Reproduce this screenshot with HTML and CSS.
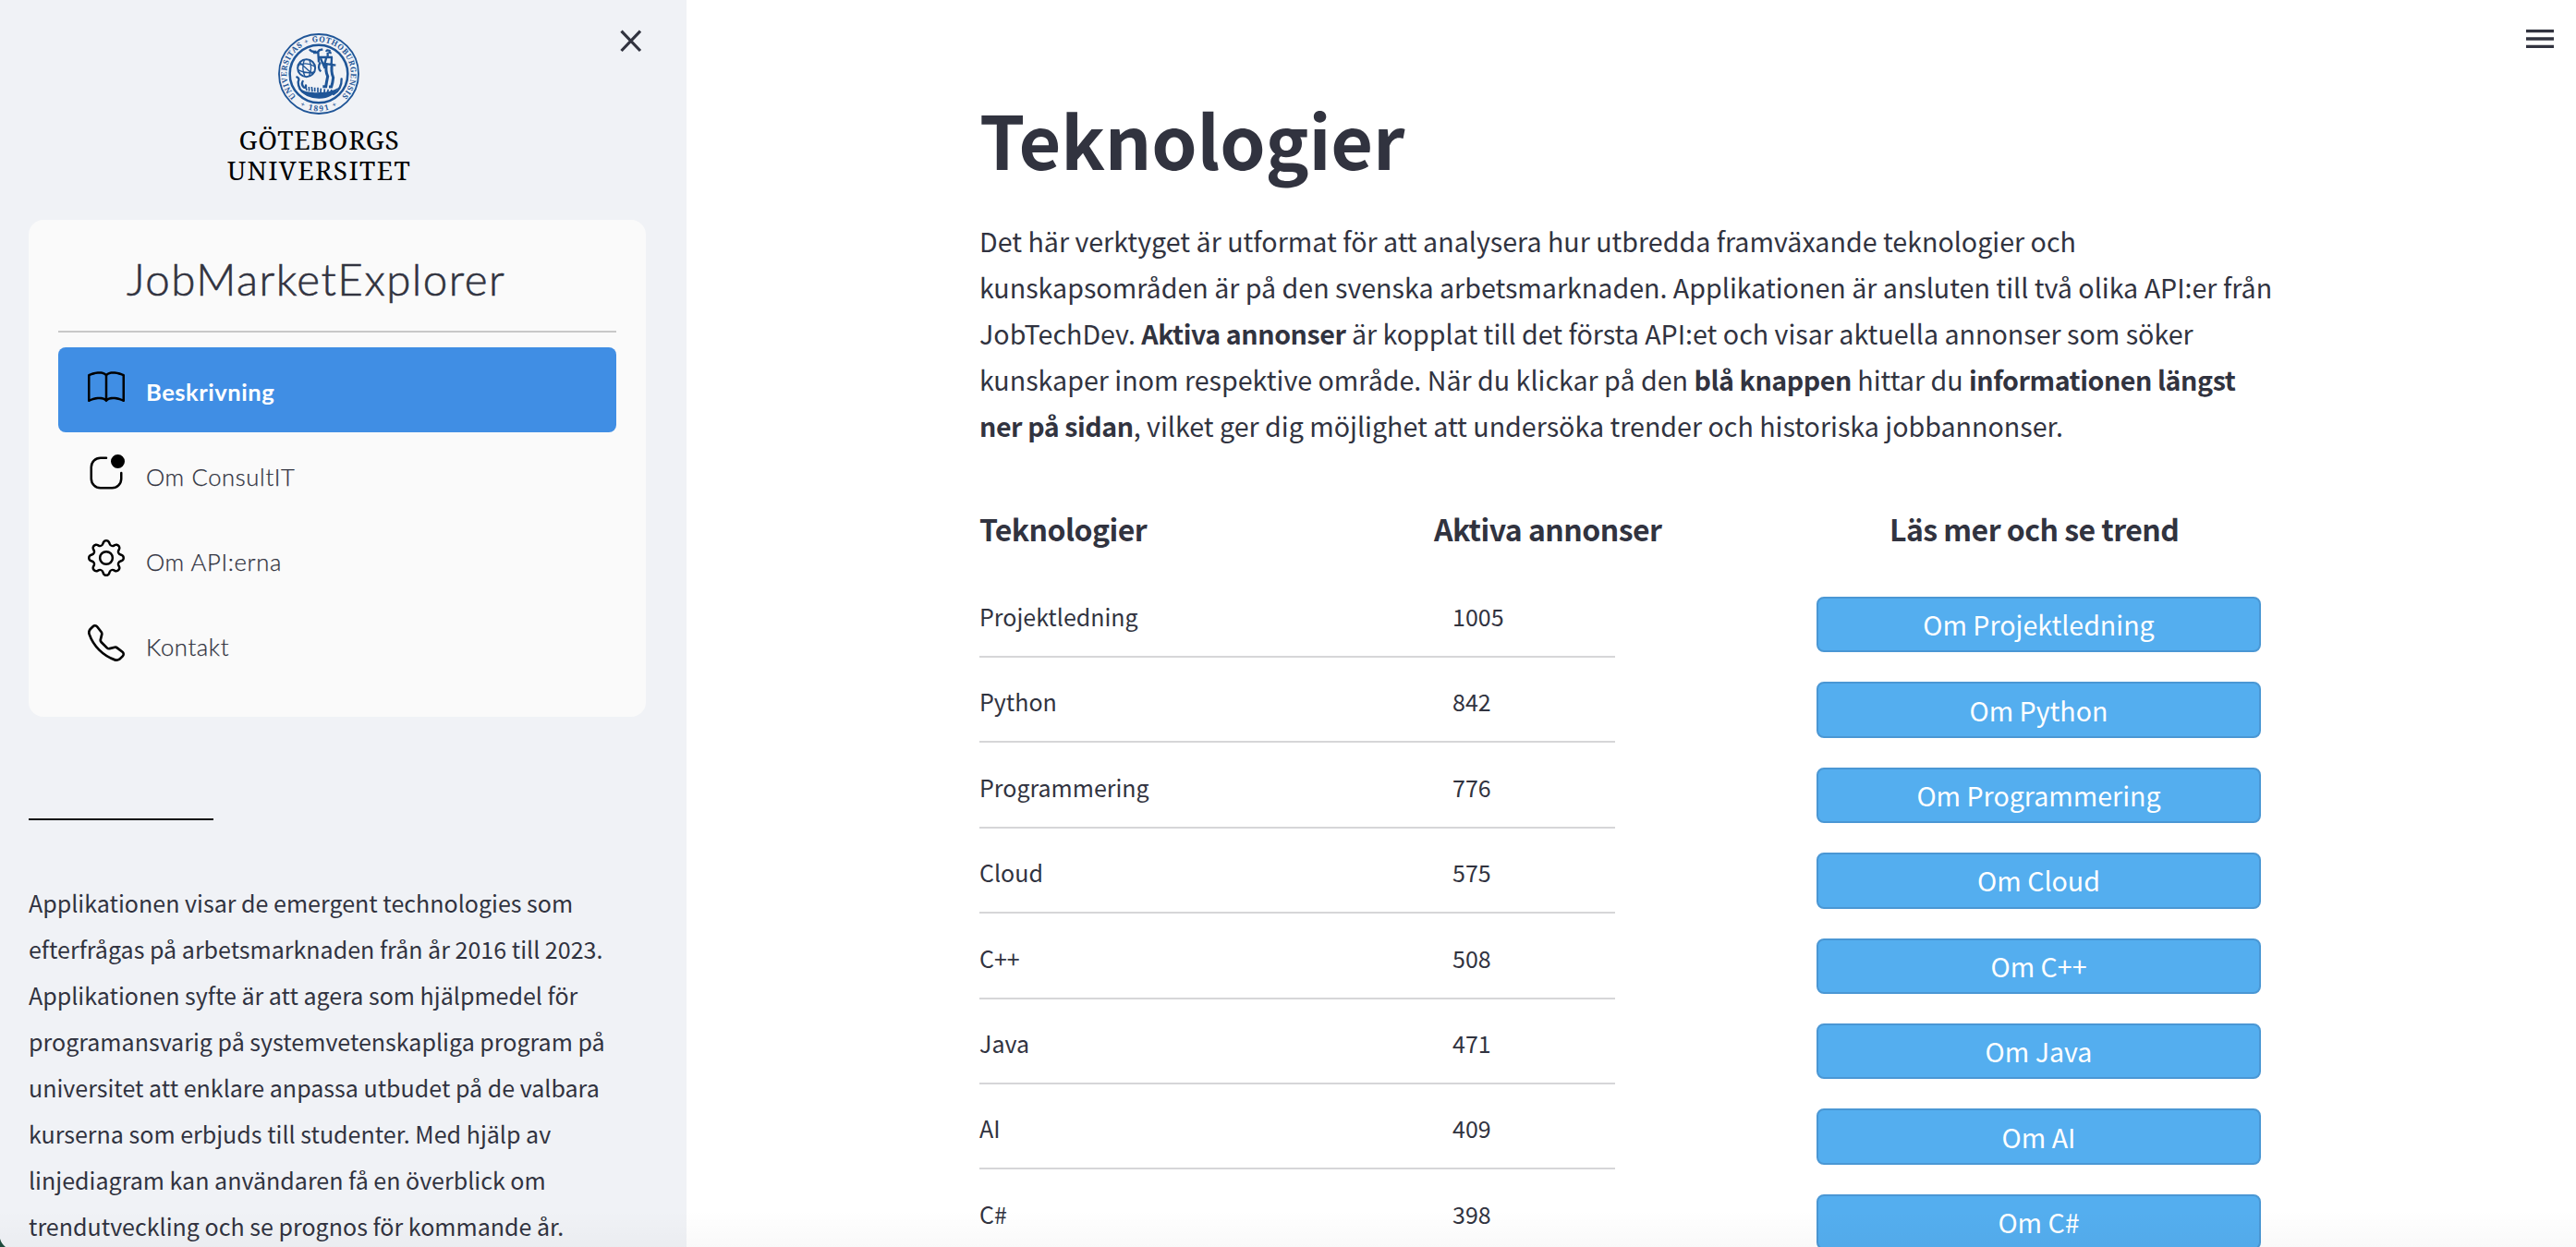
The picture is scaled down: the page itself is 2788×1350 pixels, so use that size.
FILE: index.html
```html
<!DOCTYPE html>
<html lang="sv">
<head>
<meta charset="utf-8">
<title>JobMarketExplorer</title>
<link rel="stylesheet" href="styles.css">
</head>
<body>
<div class="app">
  <aside class="sidebar">
    <button class="close" aria-label="Stäng">
      <svg width="24" height="25" viewBox="0 0 24 25"><path d="M1.5 1.7 22 23M22 1.7 1.5 23" fill="none" stroke="#31333f" stroke-width="3.2"/></svg>
    </button>
    <div class="logo">
      <svg class="seal" viewBox="33 18 264 264">
        <defs>
          <path id="ring-top" d="M91.5 223.5A104 104 0 1 1 238.5 223.5"/>
          <path id="ring-bottom" d="M102.7 253.7A121 121 0 0 0 227.3 253.7"/>
        </defs>
        <g fill="none" stroke="#1f5597">
          <circle cx="165" cy="150" r="129" stroke-width="5.5"/>
          <circle cx="165" cy="150" r="94" stroke-width="7.5"/>
          <circle cx="125" cy="131" r="28.5" stroke-width="6"/>
          <path stroke-width="4" d="M98 122q28-12 54 4M97 137q26 14 54 7M118 104q-10 28 2 54M134 104q12 26-1 54M103 113l42 38"/>
          <path stroke-width="7" stroke-linecap="round" d="M94 160q10 4 4 16 0 26 24 38M239 166q1 34-26 50M113 174q-6 10 4 20 8 2 6-7"/>
          <path stroke-width="7" d="M135 70q6 10 22 7M147 81q14 2 20-8l11-3M163 80l2 32M166 96h44M190 78q0-8 10-3-2 8 6 6M194 80v20M190 96q-5 17-7 26M207 96l-1 24M178 116l42 6M170 112q-11 20 2 30M171 100l14 32"/>
          <path stroke-width="9" d="M190 116q-4 26 4 42-4 20-6 33h-10M208 118q-4 26 4 44-2 18-6 30h-8"/>
          <path stroke-width="5" d="M122 190l4 14M133 192l1 14M142 192l2 16M152 194v14M162 194v16M172 197l-1 14M184 199l-1 12M196 200l-3 10M207 201l-4 10"/>
        </g>
        <path fill="#1f5597" d="M98 196q28 18 70 14 38 0 60-15-18 36-63 35-46 0-67-34Z"/>
        <g fill="#1f5597" class="seal-text">
          <text textLength="488"><textPath href="#ring-top" textLength="488">UNIVERSITAS + GOTHOBURGENSIS</textPath></text>
          <text textLength="129"><textPath href="#ring-bottom" textLength="129">+ 1891 +</textPath></text>
        </g>
      </svg>
      <div class="name name-top">GÖTEBORGS</div>
      <div class="name">UNIVERSITET</div>
    </div>

    <nav class="card">
      <h2 class="brand">JobMarketExplorer</h2>
      <ul class="menu">
        <li class="item active">
          <svg class="icon" viewBox="0 0 16 16"><path d="M1 2.828c.885-.37 2.154-.769 3.388-.893 1.33-.134 2.458.063 3.112.752v9.746c-.935-.53-2.12-.603-3.213-.493-1.18.12-2.37.461-3.287.811zm7.5-.141c.654-.689 1.782-.886 3.112-.752 1.234.124 2.503.523 3.388.893v9.923c-.918-.35-2.107-.692-3.287-.81-1.094-.111-2.278-.039-3.213.492zM8 1.783C7.015.936 5.587.81 4.287.94c-1.514.153-3.042.672-3.994 1.105A.5.5 0 0 0 0 2.5v11a.5.5 0 0 0 .707.455c.882-.4 2.303-.881 3.68-1.02 1.409-.142 2.59.087 3.223.877a.5.5 0 0 0 .78 0c.633-.79 1.814-1.019 3.222-.877 1.378.139 2.8.62 3.681 1.02A.5.5 0 0 0 16 13.5v-11a.5.5 0 0 0-.293-.455c-.952-.433-2.48-.952-3.994-1.105C10.413.809 8.985.936 8 1.783"/></svg>
          <span>Beskrivning</span>
        </li>
        <li class="item">
          <svg class="icon" viewBox="0 0 16 16"><path d="M5.5 2A3.5 3.5 0 0 0 2 5.5v5A3.5 3.5 0 0 0 5.5 14h5a3.5 3.5 0 0 0 3.5-3.5V8a.5.5 0 0 1 1 0v2.5a4.5 4.5 0 0 1-4.5 4.5h-5A4.5 4.5 0 0 1 1 10.5v-5A4.5 4.5 0 0 1 5.5 1H8a.5.5 0 0 1 0 1zM16 3a3 3 0 1 1-6 0 3 3 0 0 1 6 0"/></svg>
          <span>Om ConsultIT</span>
        </li>
        <li class="item">
          <svg class="icon" viewBox="0 0 16 16"><path d="M8 4.754a3.246 3.246 0 1 0 0 6.492 3.246 3.246 0 0 0 0-6.492M5.754 8a2.246 2.246 0 1 1 4.492 0 2.246 2.246 0 0 1-4.492 0"/><path d="M9.796 1.343c-.527-1.79-3.065-1.79-3.592 0l-.094.319a.873.873 0 0 1-1.255.52l-.292-.16c-1.64-.892-3.433.902-2.54 2.541l.159.292a.873.873 0 0 1-.52 1.255l-.319.094c-1.79.527-1.79 3.065 0 3.592l.319.094a.873.873 0 0 1 .52 1.255l-.16.292c-.892 1.64.901 3.434 2.541 2.54l.292-.159a.873.873 0 0 1 1.255.52l.094.319c.527 1.79 3.065 1.79 3.592 0l.094-.319a.873.873 0 0 1 1.255-.52l.292.16c1.64.893 3.434-.902 2.54-2.541l-.159-.292a.873.873 0 0 1 .52-1.255l.319-.094c1.79-.527 1.79-3.065 0-3.592l-.319-.094a.873.873 0 0 1-.52-1.255l.16-.292c.893-1.64-.902-3.433-2.541-2.54l-.292.159a.873.873 0 0 1-1.255-.52zm-2.633.283c.246-.835 1.428-.835 1.674 0l.094.319a1.873 1.873 0 0 0 2.693 1.115l.291-.16c.764-.415 1.6.42 1.184 1.185l-.159.292a1.873 1.873 0 0 0 1.116 2.692l.318.094c.835.246.835 1.428 0 1.674l-.319.094a1.873 1.873 0 0 0-1.115 2.693l.16.291c.415.764-.42 1.6-1.185 1.184l-.291-.159a1.873 1.873 0 0 0-2.693 1.116l-.094.318c-.246.835-1.428.835-1.674 0l-.094-.319a1.873 1.873 0 0 0-2.692-1.115l-.292.16c-.764.415-1.6-.42-1.184-1.185l.159-.291A1.873 1.873 0 0 0 1.945 8.93l-.319-.094c-.835-.246-.835-1.428 0-1.674l.319-.094A1.873 1.873 0 0 0 3.06 4.377l-.16-.292c-.415-.764.42-1.6 1.185-1.184l.292.159a1.873 1.873 0 0 0 2.692-1.115z"/></svg>
          <span>Om API:erna</span>
        </li>
        <li class="item">
          <svg class="icon" viewBox="0 0 16 16"><path d="M3.654 1.328a.678.678 0 0 0-1.015-.063L1.605 2.3c-.483.484-.661 1.169-.45 1.77a17.6 17.6 0 0 0 4.168 6.608 17.6 17.6 0 0 0 6.608 4.168c.601.211 1.286.033 1.77-.45l1.034-1.034a.678.678 0 0 0-.063-1.015l-2.307-1.794a.68.68 0 0 0-.58-.122l-2.19.547a1.75 1.75 0 0 1-1.657-.459L5.482 8.062a1.75 1.75 0 0 1-.46-1.657l.548-2.19a.68.68 0 0 0-.122-.58zM1.884.511a1.745 1.745 0 0 1 2.612.163L6.29 2.98c.329.423.445.974.315 1.494l-.547 2.19a.68.68 0 0 0 .178.643l2.457 2.457a.68.68 0 0 0 .644.178l2.189-.547a1.75 1.75 0 0 1 1.494.315l2.306 1.794c.829.645.905 1.87.163 2.611l-1.034 1.034c-.74.74-1.846 1.065-2.877.702a18.6 18.6 0 0 1-7.01-4.42 18.6 18.6 0 0 1-4.42-7.009c-.362-1.03-.037-2.137.703-2.877z"/></svg>
          <span>Kontakt</span>
        </li>
      </ul>
    </nav>

    <hr class="rule">
    <p class="about">Applikationen visar de emergent technologies som<br>efterfrågas på arbetsmarknaden från år 2016 till 2023.<br>Applikationen syfte är att agera som hjälpmedel för<br>programansvarig på systemvetenskapliga program på<br>universitet att enklare anpassa utbudet på de valbara<br>kurserna som erbjuds till studenter. Med hjälp av<br>linjediagram kan användaren få en överblick om<br>trendutveckling och se prognos för kommande år.</p>
  </aside>

  <main class="main">
    <button class="burger" aria-label="Meny">
      <svg width="30" height="20" viewBox="0 0 30 20"><path d="M0 0h30v3.3H0zM0 8.3h30v3.4H0zM0 16.7h30V20H0z" fill="#31333f"/></svg>
    </button>
    <h1 class="title">Teknologier</h1>
    <p class="intro">Det här verktyget är utformat för att analysera hur utbredda framväxande teknologier och<br>kunskapsområden är på den svenska arbetsmarknaden. Applikationen är ansluten till två olika API:er från<br>JobTechDev. <strong>Aktiva annonser</strong> är kopplat till det första API:et och visar aktuella annonser som söker<br>kunskaper inom respektive område. När du klickar på den <strong>blå knappen</strong> hittar du <strong>informationen längst</strong><br><strong>ner på sidan</strong>, vilket ger dig möjlighet att undersöka trender och historiska jobbannonser.</p>

    <div class="heads">
      <h3>Teknologier</h3><h3>Aktiva annonser</h3><h3 class="trend">Läs mer och se trend</h3>
    </div>
    <div class="rows">
      <div class="row"><div class="data"><span>Projektledning</span><span>1005</span></div><button class="btn">Om Projektledning</button></div>
      <div class="row"><div class="data"><span>Python</span><span>842</span></div><button class="btn">Om Python</button></div>
      <div class="row"><div class="data"><span>Programmering</span><span>776</span></div><button class="btn">Om Programmering</button></div>
      <div class="row"><div class="data"><span>Cloud</span><span>575</span></div><button class="btn">Om Cloud</button></div>
      <div class="row"><div class="data"><span>C++</span><span>508</span></div><button class="btn">Om C++</button></div>
      <div class="row"><div class="data"><span>Java</span><span>471</span></div><button class="btn">Om Java</button></div>
      <div class="row"><div class="data"><span>AI</span><span>409</span></div><button class="btn">Om AI</button></div>
      <div class="row"><div class="data"><span>C#</span><span>398</span></div><button class="btn">Om C#</button></div>
    </div>
  </main>
</div>
<div class="shade"></div>
<svg class="corner" width="6" height="9" viewBox="0 0 6 9"><path d="M0 0Q1.5 5.500 6 9H0Z" fill="#1d4a3c"/></svg>
</body>
</html>
```
FILE: styles.css
```css
* { box-sizing: border-box; }

body {
  margin: 0;
  height: 1350px;
  overflow: hidden;
  background: #fff;
  color: #31333f;
  font-family: "Noto Sans CJK SC", "Noto Sans", sans-serif;
}

h1, h2, h3, p, ul { margin: 0; padding: 0; }
button { padding: 0; border: 0; background: none; font-family: inherit; }

.app { display: flex; height: 1350px; overflow: hidden; }

/* Sidebar */
.sidebar {
  position: relative;
  flex: none;
  width: 743px;
  padding: 36px 44px 0 31px;
  background: #f0f2f6;
}
.close { position: absolute; top: 31.5px; left: 671px; line-height: 0; }

.logo {
  display: flex;
  flex-direction: column;
  align-items: center;
  width: 629px;
  height: 202px;
}
.seal { display: block; width: 88px; height: 88px; margin-right: 2px; }
.seal-text { font: 700 25px "Noto Serif", serif; }
.name {
  color: #000;
  font: 400 28px/33px "Noto Serif", serif;
  letter-spacing: 1.4px;
  white-space: nowrap;
}
.name-top { margin-top: 10.5px; letter-spacing: 0.8px; }

.card {
  height: 538px;
  padding: 32px 32px 0;
  border-radius: 16px;
  background: #fafafa;
}
.brand {
  height: 90px;
  padding-left: 74px;
  border-bottom: 2px solid #c8c8c8;
  font: 300 47.5px/64px Lato, sans-serif;
  letter-spacing: 1.5px;
  -webkit-text-stroke: 0.6px #31333f;
  white-space: nowrap;
}
.menu { margin-top: 16px; list-style: none; }
.item {
  display: flex;
  gap: 23px;
  height: 92px;
  padding: 24px 32px 0;
  border-radius: 8px;
  font: 300 25.6px/40px Lato, sans-serif;
  letter-spacing: 0.65px;
  -webkit-text-stroke: 0.25px #31333f;
}
.item span { margin-top: 4px; }
.item.active {
  background: #408ee4;
  color: #fff;
  font-weight: 700;
  letter-spacing: 0.5px;
  -webkit-text-stroke: 0;
}
.icon { flex: none; width: 40px; height: 40px; fill: #000; }

.rule { width: 200px; height: 2px; margin: 110px 0 0; border: 0; background: #0c0c0c; }
.about { margin-top: 64px; font-size: 25.04px; line-height: 50px; white-space: nowrap; }

/* Main column */
.main { position: relative; flex: 1; padding: 90px 0 0 317px; }
.burger { position: absolute; top: 32px; right: 24px; line-height: 0; }

.title { font-size: 79px; font-weight: 700; line-height: 120px; letter-spacing: -0.2px; }
.intro { margin-top: 26px; font-size: 28.64px; line-height: 50px; white-space: nowrap; }
.intro strong { font-weight: 700; letter-spacing: -0.44px; }

.heads {
  display: grid;
  grid-template-columns: 492px 414px 481px;
  height: 160px;
  padding-top: 61px;
}
.heads h3 { font-size: 32px; font-weight: 700; line-height: 50px; letter-spacing: -0.55px; white-space: nowrap; }
.heads .trend { padding-left: 79px; }

.row {
  display: grid;
  grid-template-columns: 688px 481px;
  column-gap: 218px;
  align-items: start;
  height: 92.4px;
}
.data {
  display: grid;
  grid-template-columns: 512px 1fr;
  height: 66px;
  padding-top: 1px;
  border-bottom: 2px solid #d6d6d8;
  font-size: 25px;
  line-height: 40px;
}
.btn {
  height: 60.4px;
  border: 2px solid #4a97d4;
  border-radius: 8px;
  background: #54aeef;
  color: #fff;
  font-size: 28.6px;
  line-height: 54px;
}

/* Window edge */
.shade {
  position: absolute;
  left: 0;
  top: 1310px;
  width: 2788px;
  height: 40px;
  background: linear-gradient(rgba(0, 0, 0, 0), rgba(0, 0, 0, 0.025));
}
.corner { position: absolute; left: 0; top: 1341px; }
```
